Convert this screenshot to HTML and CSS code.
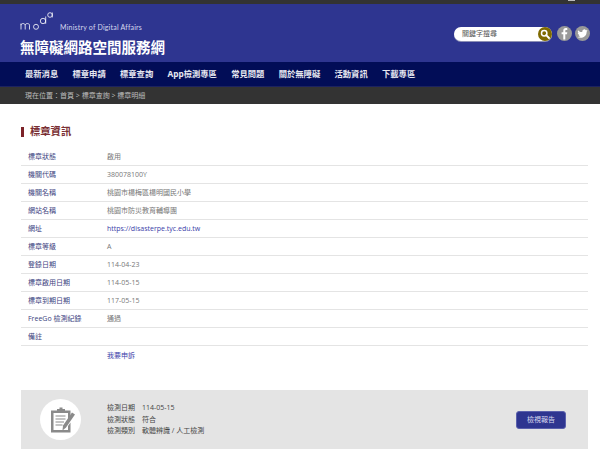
FILE: index.html
```html
<!DOCTYPE html>
<html lang="zh-Hant">
<head>
<meta charset="utf-8">
<title>無障礙網路空間服務網</title>
<link rel="stylesheet" href="styles.css">
</head>
<body>
<div class="topbar"><span class="topbar-mark"></span></div>
<header class="masthead">
  <div class="brand">
    <div class="moda">
      <svg class="moda-logo" width="34" height="19" viewBox="0 0 34 19" fill="none" stroke="#fff" stroke-width="0.8">
        <path d="M1 17.500V11.500M1 13.200c0-2.200 4.200-2.200 4.200 0v4.300M5.200 13.200c0-2.200 4.300-2.200 4.300 0v4.300"/>
        <circle cx="16" cy="14.800" r="2.500"/>
        <circle cx="23" cy="9" r="2.700"/>
        <path d="M25.700 4.500V11.800"/>
        <circle cx="30" cy="3" r="2.300"/>
        <path d="M32.300 0.500V5.400"/>
      </svg>
      <span class="ministry">Ministry of Digital Affairs</span>
    </div>
    <div class="site-title">無障礙網路空間服務網</div>
  </div>
  <div class="tools">
    <div class="search">
      <span class="search-text">關鍵字搜尋</span>
      <span class="search-btn">
        <svg width="10" height="10" viewBox="0 0 10 10" fill="none" stroke="#fff"><circle cx="4.200" cy="4.200" r="2.700" stroke-width="1.500"/><path d="M6.200 6.200L9 9" stroke-width="1.900" stroke-linecap="round"/></svg>
      </span>
    </div>
    <span class="social">
      <svg width="15" height="15" viewBox="0 0 15 15"><path fill="#fff" d="M8.300 13.500V8.200h1.700l.3-2H8.300V4.900c0-.6.2-1 1-1h1V2.200c-.3 0-.9-.1-1.500-.1-1.600 0-2.500.9-2.500 2.600v1.500H4.600v2h1.700v5.300z"/></svg>
    </span>
    <span class="social">
      <svg width="15" height="15" viewBox="0 0 15 15"><path fill="#fff" d="M12.400 4.500c-.4.2-.8.3-1.200.3.400-.2.800-.6.900-1.100-.4.200-.9.400-1.300.5a2 2 0 0 0-3.500 1.800C5.600 6.400 4.100 5.600 3.100 4.300c-.5.900-.3 2.100.6 2.700-.3 0-.6-.1-.9-.3 0 1 .7 1.800 1.600 2-.3.100-.6.100-.9 0 .3.800 1 1.400 1.900 1.400-.9.700-2 1-3 .9 3.100 1.900 9.300.8 9.300-5.500 .4-.3.700-.6 1-1z"/></svg>
    </span>
  </div>
</header>
<nav class="mainnav">
  <a>最新消息</a><a>標章申請</a><a>標章查詢</a><a>App檢測專區</a><a>常見問題</a><a>關於無障礙</a><a>活動資訊</a><a>下載專區</a>
</nav>
<div class="crumbs">現在位置：首頁 &gt; 標章查詢 &gt; 標章明細</div>
<main class="content">
  <h1 class="section-title">標章資訊</h1>
  <dl class="info">
    <div class="row"><dt>標章狀態</dt><dd>啟用</dd></div>
    <div class="row"><dt>機關代碼</dt><dd>380078100Y</dd></div>
    <div class="row"><dt>機關名稱</dt><dd>桃園市楊梅區楊明國民小學</dd></div>
    <div class="row"><dt>網站名稱</dt><dd>桃園市防災教育輔導團</dd></div>
    <div class="row"><dt>網址</dt><dd><a class="link">https://disasterpe.tyc.edu.tw</a></dd></div>
    <div class="row"><dt>標章等級</dt><dd>A</dd></div>
    <div class="row"><dt>登錄日期</dt><dd>114-04-23</dd></div>
    <div class="row"><dt>標章啟用日期</dt><dd>114-05-15</dd></div>
    <div class="row"><dt>標章到期日期</dt><dd>117-05-15</dd></div>
    <div class="row"><dt>FreeGo 檢測紀錄</dt><dd>通過</dd></div>
    <div class="row"><dt>備註</dt><dd></dd></div>
    <div class="row last"><dt></dt><dd><a class="link">我要申訴</a></dd></div>
  </dl>
  <section class="report">
    <div class="report-icon">
      <svg width="28" height="28" viewBox="0 0 28 28">
        <g fill="#8a8a8a" transform="translate(1.500 0)">
          <path d="M2.500 4.500H8.500V3H11V1.500H14V3H16.500V4.500H22V11L19.500 14.500V7H5V24H19.500V20L22 16.500V26.500H2.500z"/>
          <path d="M7 9.500H17V10.500H7zM7 12.500H17V13.500H7zM7 15.500H15.500V16.500H7zM7 18.500H14V19.500H7z"/>
          <path d="M23.500 6.500L26.500 8.500L17.500 21.500L14 24.500L14.500 19.500z"/>
        </g>
      </svg>
    </div>
    <div class="report-meta">
      <div class="meta-line"><span>檢測日期</span><span>114-05-15</span></div>
      <div class="meta-line"><span>檢測狀態</span><span>符合</span></div>
      <div class="meta-line"><span>檢測類別</span><span>軟體辨識 / 人工檢測</span></div>
    </div>
    <a class="report-btn">檢視報告</a>
  </section>
</main>
</body>
</html>
```
FILE: styles.css
```css
* { box-sizing: border-box; }
html, body { margin: 0; padding: 0; height: 462px; overflow: hidden; background: #fff; }
body { font-family: "Open Sans", "Noto Sans CJK TC", sans-serif; font-size: 7px; color: #666; }

.topbar { height: 4px; background: #333; position: relative; }
.topbar-mark { position: absolute; left: 568px; top: 0; width: 7px; height: 1px; background: #bbb; }

.masthead { height: 58px; background: #2e3590; display: flex; justify-content: space-between; align-items: flex-start; padding: 8px 10px 0 20px; }
.moda { display: flex; align-items: flex-end; height: 19px; }
.moda-logo { display: block; margin-right: 6px; }
.ministry { font-family: "Lato", sans-serif; font-size: 7px; line-height: 8px; color: #d6d8ee; letter-spacing: 0.2px; position: relative; top: -0.500px; }
.site-title { margin-top: 6px; font-family: "Noto Sans CJK TC", sans-serif; font-size: 14.500px; line-height: 20px; font-weight: 700; color: #fff; white-space: nowrap; }

.tools { display: flex; align-items: center; gap: 3px; margin-top: 14px; }
.search { width: 98px; height: 14px; margin-right: 2px; background: #fff; border-radius: 7px; display: flex; align-items: center; justify-content: space-between; padding-left: 8px; box-shadow: 0 1px 0 #8c8fb5; }
.search-text { color: #555; font-size: 7px; line-height: 14px; }
.search-btn { width: 14px; height: 14px; border-radius: 50%; background: #7f6a00; display: flex; align-items: center; justify-content: center; flex: none; }
.social { width: 15px; height: 15px; border-radius: 50%; background: #999; display: block; }
.social svg { display: block; }

.mainnav { height: 25px; background: #020d57; border-bottom: 1px solid #1c2260; display: flex; gap: 14.300px; padding-left: 25px; align-items: center; }
.mainnav a { color: #e6e7f0; font-family: "Noto Sans", "Noto Sans CJK TC", sans-serif; font-size: 8.300px; line-height: 24px; font-weight: 700; white-space: nowrap; }

.crumbs { height: 17px; background: #333; color: #bdbdbd; font-size: 7px; line-height: 17px; padding-left: 25px; }

.content { padding: 0 12px 0 21px; }
.section-title { margin: 23px 0 11px; height: 10px; border-left: 3px solid #7c2228; padding-left: 6px; font-size: 10.300px; line-height: 8px; font-weight: 700; color: #7a3034; }

.info { margin: 0; }
.row { display: flex; height: 18px; border-bottom: 1px solid #e4e4e4; align-items: center; padding-bottom: 1px; }
.row.last { border-bottom: 0; }
.row dt { width: 86px; padding-left: 7px; color: #3d4380; flex: none; }
.row dd { margin: 0; color: #777; }
.link { color: #3a40a8; }

.report { margin-top: 26px; height: 59px; background: #e4e4e4; display: flex; align-items: center; padding-left: 19px; padding-right: 22px; }
.report-icon { width: 41px; height: 41px; border-radius: 50%; background: #fff; display: flex; align-items: center; justify-content: center; flex: none; }
.report-meta { margin-left: 26px; flex: 1; }
.meta-line { display: flex; gap: 7px; line-height: 11.500px; color: #444; }
.report-btn { width: 50px; height: 18px; background: #2e3590; border: 1px solid #5a60ac; border-radius: 3px; color: #d8d9ee; text-align: center; line-height: 16px; font-size: 7px; }
```
